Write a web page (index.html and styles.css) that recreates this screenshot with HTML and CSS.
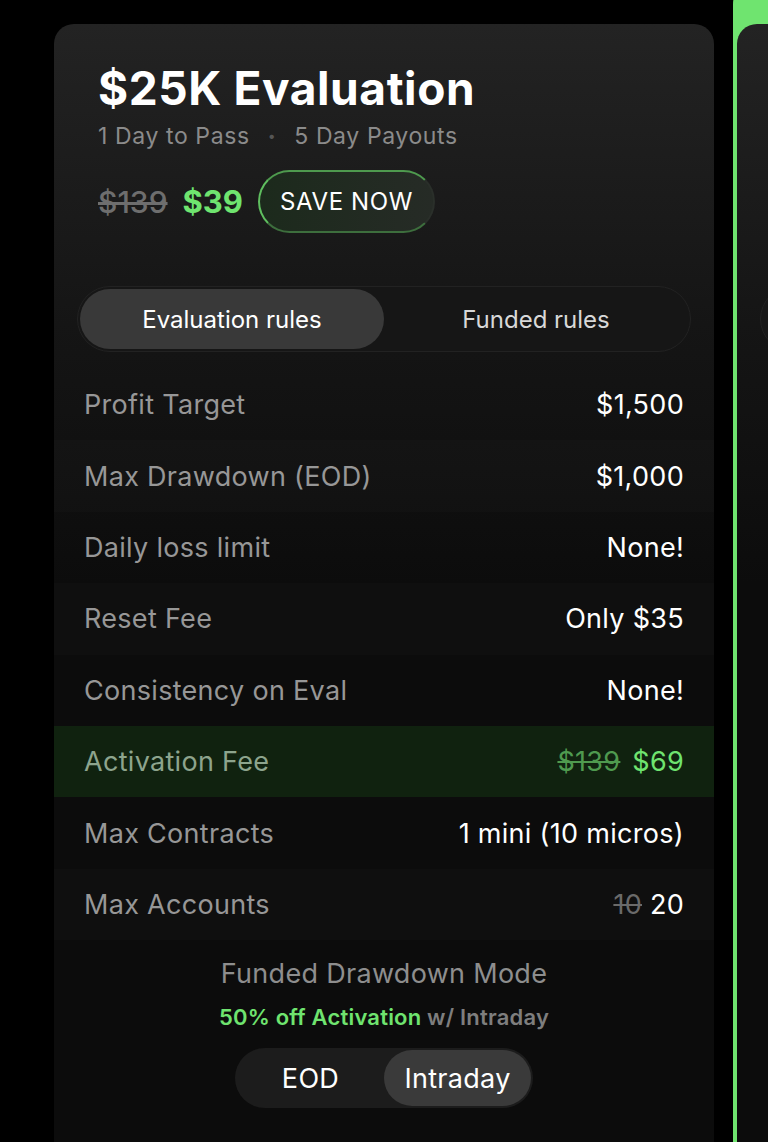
FILE: index.html
```html
<!DOCTYPE html>
<html lang="en">
<head>
  <meta charset="UTF-8" />
  <meta name="viewport" content="width=device-width, initial-scale=1" />
  <title>$25K Evaluation</title>
  <link rel="stylesheet" href="styles.css">
</head>
<body>
  <div class="card">
    <div class="head">
      <h1>$25K Evaluation</h1>
      <p class="sub">1 Day to Pass <span class="dot">•</span> 5 Day Payouts</p>
      <div class="price">
        <span class="old">$139</span>
        <span class="new">$39</span>
        <span class="save">SAVE NOW</span>
      </div>
    </div>

    <div class="tabs">
      <div class="tab active">Evaluation rules</div>
      <div class="tab">Funded rules</div>
    </div>

    <div class="rules">
      <div class="row"><span class="label">Profit Target</span><span class="value">$1,500</span></div>
      <div class="row"><span class="label">Max Drawdown (EOD)</span><span class="value">$1,000</span></div>
      <div class="row"><span class="label">Daily loss limit</span><span class="value">None!</span></div>
      <div class="row"><span class="label">Reset Fee</span><span class="value">Only $35</span></div>
      <div class="row"><span class="label">Consistency on Eval</span><span class="value">None!</span></div>
      <div class="row highlight"><span class="label">Activation Fee</span><span class="value"><s class="old-green">$139</s> <span class="green">$69</span></span></div>
      <div class="row"><span class="label">Max Contracts</span><span class="value">1 mini (10 micros)</span></div>
      <div class="row"><span class="label">Max Accounts</span><span class="value"><s class="muted">10</s> 20</span></div>
    </div>

    <div class="mode">
      <div class="mode-title">Funded Drawdown Mode</div>
      <div class="mode-note"><span class="green">50% off Activation</span> w/ Intraday</div>
      <div class="toggle">
        <div class="opt">EOD</div>
        <div class="opt active">Intraday</div>
      </div>
    </div>
  </div>

  <div class="card-wrap">
    <div class="card second">
      <div class="head"></div>
      <div class="tabs ghost"></div>
    </div>
  </div>
</body>
</html>
```

FILE: styles.css
```css
body {
  margin: 0;
  height: 1142px;
  overflow: hidden;
  background-color: #000;
  font-family: Inter, 'Noto Sans', sans-serif;
  color: #fff;
  display: flex;
  gap: 19px;
  padding-left: 54px;
}

.card {
  flex: 0 0 660px;
  margin-top: 24px;
  border-radius: 20px 20px 0 0;
  background: linear-gradient(to bottom, #232323 0px, #151515 300px, #0c0c0c 560px, #0c0c0c 100%);
  height: 1200px;
}

.head {
  padding: 38px 44px 0;
}

h1 {
  margin: 0;
  font-size: 46px;
  line-height: 52px;
  font-weight: 700;
  letter-spacing: 0.6px;
}

.sub {
  margin: 8px 0 0;
  font-size: 23px;
  line-height: 28px;
  letter-spacing: 0.6px;
  color: #8b8b8b;
}

.dot {
  color: #555;
  margin: 0 11px;
  font-size: 14px;
  vertical-align: 3px;
}

.price {
  margin-top: 19px;
  display: flex;
  align-items: center;
  height: 65px;
}

.old {
  font-size: 30px;
  color: #6e6e6e;
  text-decoration: line-through;
  font-weight: 500;
}

.new {
  font-size: 31px;
  font-weight: 700;
  color: #6fe46f;
  margin-left: 15px;
}

.save {
  margin-left: 15px;
  height: 63px;
  width: 177px;
  box-sizing: border-box;
  display: flex;
  align-items: center;
  justify-content: center;
  border-radius: 32px;
  border: 2px solid #2a2f2a;
  border-left-color: #5fbf5f;
  border-top-color: #4e9a4e;
  border-bottom-color: #3d6e3d;
  background: linear-gradient(to right, #1c2a1c, #262b26);
  font-size: 24px;
  letter-spacing: 0.6px;
}

.tabs {
  margin: 52px 23px 0;
  height: 66px;
  box-sizing: border-box;
  border-radius: 33px;
  background-color: #161616;
  border: 1px solid #222;
  display: flex;
  padding: 2px;
}

.tab {
  flex: 1;
  display: flex;
  align-items: center;
  justify-content: center;
  border-radius: 31px;
  font-size: 24px;
  color: #d8d8d8;
}

.tab.active {
  background-color: #393939;
  color: #fff;
}

.rules {
  margin-top: 17px;
}

.row {
  height: 71.4px;
  display: flex;
  align-items: center;
  justify-content: space-between;
  padding: 0 30px;
  font-size: 27px;
  letter-spacing: 0.3px;
}

.row:nth-child(even) {
  background-color: rgba(255, 255, 255, 0.015);
}

.row.highlight {
  background-color: #10220f;
}

.label {
  color: #979797;
}

.highlight .label {
  color: #8da48d;
}

.value {
  color: #fff;
}

.green {
  color: #6fe46f;
}

.old-green {
  color: #4f9a4f;
  margin-right: 4px;
}

.muted {
  color: #6a6a6a;
}

.mode {
  margin-top: 17px;
  display: flex;
  flex-direction: column;
  align-items: center;
}

.mode-title {
  font-size: 27px;
  line-height: 34px;
  letter-spacing: 0.3px;
  color: #8e8e8e;
}

.mode-note {
  margin-top: 12px;
  font-size: 22px;
  line-height: 28px;
  letter-spacing: 0.2px;
  font-weight: 600;
  color: #7e7e7e;
}

.toggle {
  margin-top: 17px;
  width: 298px;
  height: 60px;
  box-sizing: border-box;
  padding: 2px;
  border-radius: 30px;
  background-color: #1c1c1c;
  display: flex;
}

.opt {
  flex: 1;
  display: flex;
  align-items: center;
  justify-content: center;
  border-radius: 28px;
  font-size: 27px;
  letter-spacing: 0.3px;
}

.opt.active {
  background-color: #3a3a3a;
}

.card-wrap {
  flex: 0 0 660px;
  margin-top: -20px;
  padding: 0 4px;
  background-color: #6fe46f;
  border-radius: 24px 24px 0 0;
}

.card-wrap .card {
  margin-top: 44px;
  height: 1200px;
}

.tabs.ghost {
  margin-top: 224px;
  background-color: #181818;
}
```
